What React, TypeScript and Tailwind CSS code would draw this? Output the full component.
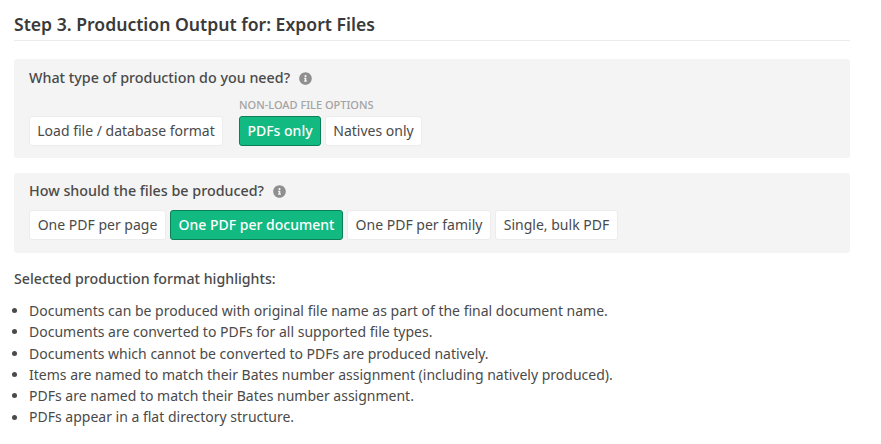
const typeOptions = [
  { label: "PDFs only", width: "w-[82px]", active: true },
  { label: "Natives only", width: "w-[97px]" },
];
const perOptions = [
  { label: "One PDF per page", width: "w-[137px]" },
  { label: "One PDF per document", width: "w-[173px]", active: true },
  { label: "One PDF per family", width: "w-[144px]" },
  { label: "Single, bulk PDF", width: "w-[123px]" },
];
const highlights = [
  "Documents can be produced with original file name as part of the final document name.",
  "Documents are converted to PDFs for all supported file types.",
  "Documents which cannot be converted to PDFs are produced natively.",
  "Items are named to match their Bates number assignment (including natively produced).",
  "PDFs are named to match their Bates number assignment.",
  "PDFs appear in a flat directory structure.",
];

function InfoIcon() {
  return (
    <svg viewBox="0 0 512 512" className="ml-[9px] h-[13px] w-[13px] fill-[#8f8f8f]" aria-hidden="true">
      <path d="M256 8C119 8 8 119 8 256s111 248 248 248 248-111 248-248S393 8 256 8zm0 110c23 0 42 19 42 42s-19 42-42 42-42-19-42-42 19-42 42-42zm56 254c0 7-5 12-12 12h-88c-7 0-12-5-12-12v-24c0-7 5-12 12-12h12v-64h-12c-7 0-12-5-12-12v-24c0-7 5-12 12-12h64c7 0 12 5 12 12v100h12c7 0 12 5 12 12v24z" />
    </svg>
  );
}

function OptionButton({ label, width, active }: { label: string; width: string; active?: boolean }) {
  return (
    <button
      className={classNames(
        "h-[30px] rounded-[3px] border text-center text-sm whitespace-nowrap",
        width,
        active ? "border-[#0b7f5a] bg-[#12b981] font-medium text-white" : "border-[#ececec] bg-white text-[#4a4a4a]"
      )}
    >
      {label}
    </button>
  );
}

function classNames(...classes: string[]) {
  return classes.filter(Boolean).join(" ");
}

export default function App() {
  return (
    <div className="h-[444px] w-[881px] overflow-hidden bg-white pt-[12px] pr-[31px] pl-[14px] font-['Noto_Sans','Open_Sans',sans-serif] text-sm text-[#4a4a4a]">
      <h2 className="h-[29px] border-b border-[#ececec] text-[17.6px] leading-[25px] font-semibold text-[#3a3a3a]">
        Step 3. Production Output for: Export Files
      </h2>

      <section className="mt-[18px] h-[99px] rounded-[3px] bg-[#f4f4f4] px-[15px] pt-[9px]">
        <div className="flex h-[20px] items-center text-[14.3px] font-medium">
          What type of production do you need?
          <InfoIcon />
        </div>
        <div className="mt-[9px] flex items-end">
          <OptionButton label="Load file / database format" width="w-[194px]" />
          <div className="ml-[16px] flex flex-col">
            <span className="mb-[4px] text-[11px] leading-[15px] font-medium text-[#a3a3a3]">NON-LOAD FILE OPTIONS</span>
            <div className="flex gap-[4px]">
              {typeOptions.map((o) => (
                <OptionButton key={o.label} {...o} />
              ))}
            </div>
          </div>
        </div>
      </section>

      <section className="mt-[15px] h-[80px] rounded-[3px] bg-[#f4f4f4] px-[15px] pt-[8px]">
        <div className="flex h-[20px] items-center text-[14.3px] font-medium">
          How should the files be produced?
          <InfoIcon />
        </div>
        <div className="mt-[9px] flex gap-[4px]">
          {perOptions.map((o) => (
            <OptionButton key={o.label} {...o} />
          ))}
        </div>
      </section>

      <p className="mt-[16px] text-[14.2px] leading-[20px] font-medium">Selected production format highlights:</p>

      <ul className="mt-[11px] -ml-[2px] leading-[21.3px]">
        {highlights.map((h) => (
          <li key={h} className="flex items-center">
            <span className="mr-[12px] h-[5px] w-[5px] rounded-full bg-[#4a4a4a]" />
            {h}
          </li>
        ))}
      </ul>
    </div>
  );
}
